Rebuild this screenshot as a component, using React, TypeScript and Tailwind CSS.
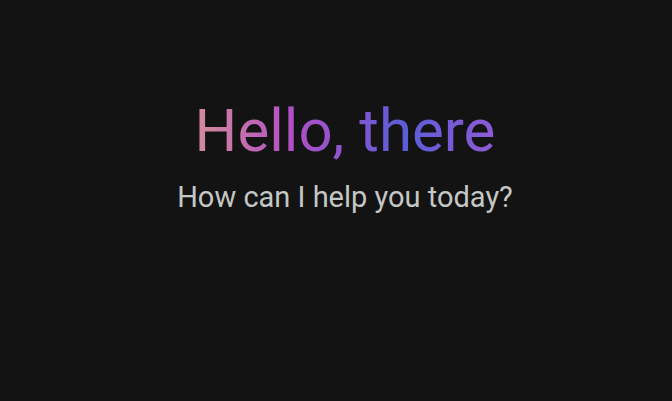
export default function App() {
  return (
    <div className="flex min-h-[401px] w-full flex-col items-center bg-[#131313] pt-[95px] pl-[18px]">
      <h1 className="bg-[linear-gradient(90deg,#d48c99_0%,#b24fc6_32%,#5b5dd8_70%,#8f5ad6_100%)] bg-clip-text font-['Roboto',sans-serif] text-[60px] leading-[72px] font-normal text-transparent">
        Hello, there
      </h1>
      <p className="mt-[12px] font-['Roboto',sans-serif] text-[29px] leading-[36px] text-[#c4c7c5]">
        How can I help you today?
      </p>
    </div>
  );
}
